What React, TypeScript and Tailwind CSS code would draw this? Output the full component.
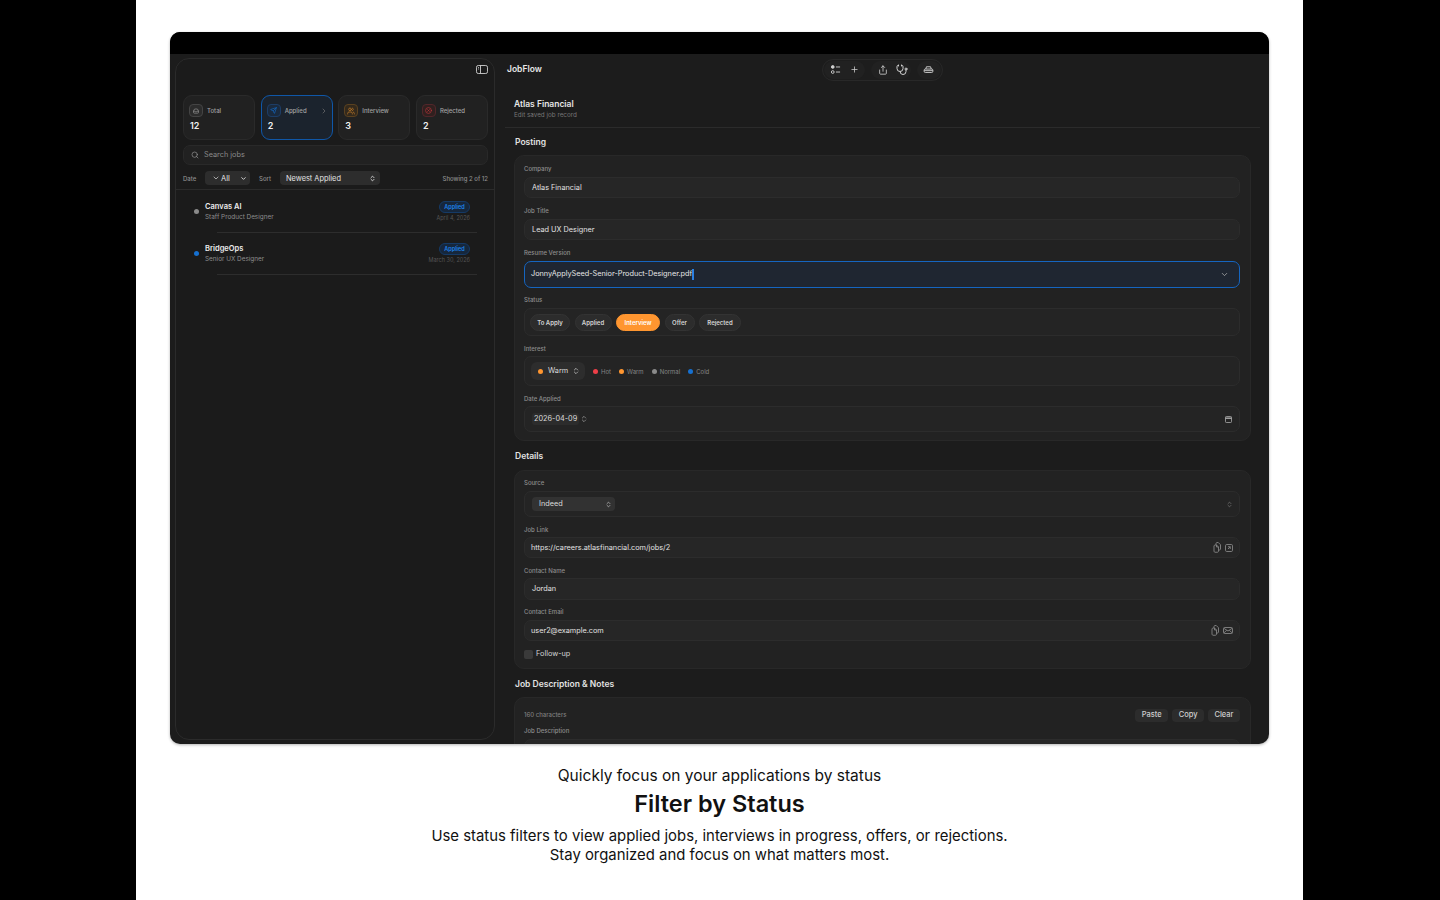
/**
 * JobFlow marketing slide: app window with status filter and job editor.
 */
import type { ReactNode } from "react";
import {
  ChevronDown,
  ChevronRight,
  ChevronsUpDown,
  CircleX,
  Plus,
  Search,
  Send,
  Share,
  Stethoscope,
  Users,
} from "lucide-react";

type IconProps = { className?: string };

function TrayIcon({ className }: IconProps) {
  return (
    <svg viewBox="0 0 24 24" fill="none" stroke="currentColor" strokeWidth="2" className={className} aria-hidden="true">
      <path d="M6 9c.5-2 1.500-3 3-3h6c1.500 0 2.500 1 3 3l1.500 3v4c0 1.500-1 2.500-2.500 2.500H7c-1.500 0-2.500-1-2.500-2.500v-4z" />
      <path d="M4.500 12.500H9c.5 1.500 1.500 2 3 2s2.500-.5 3-2h4.500" />
    </svg>
  );
}

function TaskListIcon({ className }: IconProps) {
  return (
    <svg viewBox="0 0 24 24" fill="none" stroke="currentColor" strokeWidth="2" className={className} aria-hidden="true">
      <circle cx="6" cy="6.500" r="3" fill="currentColor" />
      <circle cx="6" cy="17.500" r="3" />
      <path d="M13 6.500h9M13 17.500h9" />
    </svg>
  );
}

function PrintTrayIcon({ className }: IconProps) {
  return (
    <svg viewBox="0 0 24 24" fill="none" stroke="currentColor" strokeWidth="2" className={className} aria-hidden="true">
      <path d="M6 11l1.500-5h9L18 11" />
      <rect x="2.500" y="11" width="19" height="7.500" rx="2.500" />
      <path d="M2.500 14.500h19" />
    </svg>
  );
}

function SidebarIcon({ className }: IconProps) {
  return (
    <svg viewBox="0 0 24 18" fill="none" stroke="currentColor" strokeWidth="1.800" className={className} aria-hidden="true">
      <rect x="1" y="1" width="22" height="16" rx="3.500" />
      <path d="M9 1v16" />
      <path d="M4 5h2M4 8h2" strokeWidth="1.500" />
    </svg>
  );
}

function DocsIcon({ className }: IconProps) {
  return (
    <svg viewBox="0 0 16 22" fill="none" stroke="currentColor" strokeWidth="1.800" className={className} aria-hidden="true">
      <path d="M2 8c0-1 1-2 2-2h3l4 4v8.500c0 1-1 2-2 2H4c-1 0-2-1-2-2z" />
      <path d="M6 6V3c0-1 1-2 2-2h2.500L15 5.500V14c0 1-1 2-2 2h-2" />
      <path d="M7 6v4h4" />
    </svg>
  );
}

function OpenLinkIcon({ className }: IconProps) {
  return (
    <svg viewBox="0 0 16 16" fill="none" stroke="currentColor" strokeWidth="1.800" className={className} aria-hidden="true">
      <rect x="1" y="1" width="14" height="14" rx="2.500" />
      <path d="M6 5.500h4.500V10" />
      <path d="M10.500 5.500L6 10" />
    </svg>
  );
}

function EnvelopeIcon({ className }: IconProps) {
  return (
    <svg viewBox="0 0 20 14" fill="none" stroke="currentColor" strokeWidth="1.800" className={className} aria-hidden="true">
      <rect x="1" y="1" width="18" height="12" rx="2.500" />
      <path d="M1.500 2.500L10 8l8.500-5.500M1.500 12l6-5.500M18.500 12l-6-5.500" />
    </svg>
  );
}

function CalendarIcon({ className }: IconProps) {
  return (
    <svg viewBox="0 0 16 16" fill="none" stroke="currentColor" strokeWidth="1.800" className={className} aria-hidden="true">
      <rect x="1" y="1" width="14" height="14" rx="2.500" />
      <path d="M1 5h14" strokeWidth="3" />
    </svg>
  );
}

interface StatCardProps {
  label: string;
  value: string;
  icon: ReactNode;
  iconClass: string;
  active?: boolean;
}

function StatCard({ label, value, icon, iconClass, active }: StatCardProps) {
  return (
    <div
      className={`flex h-[45px] w-[72px] flex-col rounded-[9px] border pl-[5px] pt-[8px] ${
        active ? "border-[#0f57a8] bg-[#1b232d]" : "border-[#2a2a2a] bg-[#212121]"
      }`}
    >
      <div className="flex h-[13px] items-center">
        <span className={`flex h-[13px] w-[14px] items-center justify-center rounded-[4px] border ${iconClass}`}>
          {icon}
        </span>
        <span className="ml-[4px] text-[6px] font-medium leading-[11px] text-[#a3a3a3]">{label}</span>
        {active && <ChevronRight className="ml-auto mr-[4px] h-[8px] w-[8px] text-[#777]" />}
      </div>
      <span className="ml-[1px] mt-[2px] text-[9px] font-semibold leading-[14px] text-[#f0f0f0]">{value}</span>
    </div>
  );
}

function JobRow({ company, role, date, dot }: { company: string; role: string; date: string; dot: string }) {
  return (
    <div className="flex h-[42px] flex-col">
      <div className="flex h-[41px] items-start pl-[18px] pr-[24px] pt-[11px]">
        <span className={`mt-[7px] h-[5px] w-[5px] rounded-full ${dot}`} />
        <div className="ml-[6px] flex-1">
          <p className="text-[7.500px] font-semibold leading-[9px] text-[#ececec]">{company}</p>
          <p className="mt-[2px] text-[6.400px] leading-[9px] text-[#8d8d8d]">{role}</p>
        </div>
        <div className="-mt-px flex flex-col items-end">
          <span className="flex h-[12px] w-[31px] items-center justify-center rounded-full border border-[#153a66] bg-[#16273c] text-[5.500px] font-semibold text-[#1e84ea]">
            Applied
          </span>
          <span className="mt-[1px] text-[5.500px] leading-[9px] text-[#555]">{date}</span>
        </div>
      </div>
      <div className="ml-[41px] mr-[17px] h-px bg-[#2d2d2d]" />
    </div>
  );
}

function Sidebar() {
  return (
    <aside className="flex w-[330px] shrink-0 px-[5px] py-[4px]">
      <div className="flex w-full flex-col rounded-[14px] border border-[#2b2b2b] bg-[#1b1b1b]">
        <div className="flex h-[36px] shrink-0 items-start justify-end pr-[6px] pt-[6px]">
          <SidebarIcon className="h-[9px] w-[12px] text-[#cfcfcf]" />
        </div>
        <div className="flex justify-between pl-[7px] pr-[6px]">
          <StatCard
            label="Total"
            value="12"
            iconClass="border-[#444] bg-[#2c2c2c] text-[#999]"
            icon={<TrayIcon className="h-[8px] w-[8px]" />}
          />
          <StatCard
            active
            label="Applied"
            value="2"
            iconClass="border-[#1d3d66] bg-[#1a2a3e] text-[#1670d0]"
            icon={<Send className="h-[7px] w-[7px]" />}
          />
          <StatCard
            label="Interview"
            value="3"
            iconClass="border-[#5a4120] bg-[#33291c] text-[#c57f2c]"
            icon={<Users className="h-[8px] w-[8px]" />}
          />
          <StatCard
            label="Rejected"
            value="2"
            iconClass="border-[#52262a] bg-[#30201f] text-[#c8373c]"
            icon={<CircleX className="h-[7px] w-[7px]" />}
          />
        </div>
        <div className="ml-[7px] mr-[6px] mt-[5px] flex h-[20px] items-center rounded-[7px] border border-[#292929] bg-[#212121] pl-[7px]">
          <Search className="h-[8px] w-[8px] text-[#999]" />
          <span className="ml-[5px] pt-px text-[7.300px] text-[#8a8a8a]">Search jobs</span>
        </div>
        <div className="flex h-[24px] items-center pl-[7px] pr-[6px] pt-[2px] text-[6px] font-medium text-[#8f8f8f]">
          <span className="w-[22px]">Date</span>
          <div className="flex h-[14px] w-[45px] items-center rounded-[4px] bg-[#2d2d2d] pl-[7px] text-[7.500px] font-normal text-[#e3e3e3]">
            <ChevronDown className="h-[8px] w-[8px]" />
            <span className="ml-[1px] pt-px">All</span>
            <ChevronDown className="ml-auto mr-[3px] h-[7px] w-[7px]" strokeWidth={3} />
          </div>
          <span className="ml-[9px] w-[21px]">Sort</span>
          <div className="flex h-[14px] w-[100px] items-center rounded-[4px] bg-[#2d2d2d] pl-[6px] text-[7.400px] font-normal text-[#e3e3e3]">
            <span className="pt-px">Newest Applied</span>
            <ChevronsUpDown className="ml-auto mr-[4px] h-[7px] w-[7px]" strokeWidth={3} />
          </div>
          <span className="ml-auto text-[6px] text-[#8f8f8f]">Showing 2 of 12</span>
        </div>
        <div className="mb-px h-px bg-[#2b2b2b]" />
        <JobRow company="Canvas AI" role="Staff Product Designer" date="April 4, 2026" dot="bg-[#8a8a8a]" />
        <JobRow company="BridgeOps" role="Senior UX Designer" date="March 30, 2026" dot="bg-[#1670d0]" />
      </div>
    </aside>
  );
}

function Label({ children, className = "mb-[3px]" }: { children: ReactNode; className?: string }) {
  return (
    <p className={`h-[10px] shrink-0 text-[6px] font-medium leading-[10px] text-[#8e8e8e] ${className}`}>{children}</p>
  );
}

function TextField({ value, indent = "pl-[7px]", icons }: { value: string; indent?: string; icons?: ReactNode }) {
  return (
    <div
      className={`flex h-[21px] shrink-0 items-center rounded-[7px] border border-[#2c2c2c] bg-[#262626] pr-[6px] text-[7.300px] text-[#e2e2e2] ${indent}`}
    >
      <span className="pt-px">{value}</span>
      {icons && <span className="ml-auto flex items-center gap-[4px] text-[#858585]">{icons}</span>}
    </div>
  );
}

function Box({ className, children }: { className: string; children: ReactNode }) {
  return (
    <div className={`flex shrink-0 items-center rounded-[7px] border border-[#2c2c2c] bg-[#242424] ${className}`}>
      {children}
    </div>
  );
}

function StatusPill({ label, width, active }: { label: string; width: string; active?: boolean }) {
  return (
    <span
      className={`flex h-[17px] items-center justify-center rounded-full border text-[6px] font-semibold ${width} ${
        active ? "border-[#ff9630] bg-[#ff9630] text-white" : "border-[#333] bg-[#2c2c2c] text-[#d5d5d5]"
      }`}
    >
      {label}
    </span>
  );
}

function InterestKey({ label, dot }: { label: string; dot: string }) {
  return (
    <span className="flex items-center text-[6px] text-[#858585]">
      <span className={`mr-[3px] h-[5px] w-[5px] rounded-full ${dot}`} />
      {label}
    </span>
  );
}

function SectionTitle({ children, className }: { children: ReactNode; className: string }) {
  return (
    <h2 className={`flex h-[14px] shrink-0 items-center pl-[15px] text-[8.500px] font-semibold text-[#e2e2e2] ${className}`}>
      {children}
    </h2>
  );
}

function Card({ className, children }: { className: string; children: ReactNode }) {
  return (
    <section
      className={`ml-[14px] mr-[18px] flex shrink-0 flex-col rounded-[10px] border border-[#282828] bg-[#222222] pl-[9px] pr-[10px] ${className}`}
    >
      {children}
    </section>
  );
}

function Toolbar() {
  return (
    <div className="flex h-[22px] items-center rounded-full border border-[#282828] bg-[#1d1d1d] px-[1px] text-[#cfcfcf]">
      <div className="flex h-[18px] w-[41px] items-center justify-center gap-[9px] rounded-full bg-[#212121]">
        <TaskListIcon className="h-[11px] w-[11px]" />
        <Plus className="h-[9px] w-[9px]" />
      </div>
      <div className="ml-[6px] flex h-[18px] w-[40px] items-center gap-[8px] rounded-full bg-[#212121] pl-[7px]">
        <Share className="h-[10px] w-[10px]" />
        <Stethoscope className="h-[12px] w-[12px]" />
      </div>
      <div className="ml-[6px] flex h-[18px] w-[24px] items-center justify-center rounded-full bg-[#212121]">
        <PrintTrayIcon className="h-[11px] w-[11px]" />
      </div>
    </div>
  );
}

function Editor() {
  const docsClass = "h-[11px] w-[8px]";
  return (
    <main className="flex min-w-0 flex-1 flex-col">
      <header className="flex h-[31px] shrink-0 items-center pl-[7px] text-[8.500px] font-semibold text-[#e8e8e8]">
        JobFlow
        <div className="ml-[280px]">
          <Toolbar />
        </div>
      </header>
      <div className="ml-[5px] mr-[9px] mt-[12px] h-[31px] shrink-0 border-b border-[#2b2b2b] pl-[9px]">
        <p className="text-[8.500px] font-semibold leading-[14px] text-[#e6e6e6]">Atlas Financial</p>
        <p className="text-[6.300px] leading-[8px] text-[#777]">Edit saved job record</p>
      </div>
      <SectionTitle className="mt-[7px]">Posting</SectionTitle>
      <Card className="mt-[6px] h-[286px] pt-[8px]">
        <Label>Company</Label>
        <TextField value="Atlas Financial" />
        <Label className="mb-[3px] mt-[8px]">Job Title</Label>
        <TextField value="Lead UX Designer" />
        <Label className="mb-[3px] mt-[8px]">Resume Version</Label>
        <div className="flex h-[27px] shrink-0 items-center rounded-[7px] border border-[#1565c0] bg-[#1f2631] pl-[6px] pr-[10px] text-[7.300px] text-[#e6e6e6]">
          <span>JonnyApplySeed-Senior-Product-Designer.pdf</span>
          <span className="h-[11px] w-[1.500px] bg-[#2a7fe0]" />
          <ChevronDown className="ml-auto h-[9px] w-[9px] text-[#b0b0b0]" />
        </div>
        <Label className="mb-[3px] mt-[7px]">Status</Label>
        <Box className="h-[28px] gap-[4.500px] pl-[5px]">
          <StatusPill label="To Apply" width="w-[40px]" />
          <StatusPill label="Applied" width="w-[37px]" />
          <StatusPill active label="Interview" width="w-[44px]" />
          <StatusPill label="Offer" width="w-[30px]" />
          <StatusPill label="Rejected" width="w-[42px]" />
        </Box>
        <Label className="mb-[2px] mt-[8px]">Interest</Label>
        <Box className="h-[30px] pl-[6px]">
          <span className="mr-[8px] flex h-[18px] w-[54px] items-center rounded-[6px] bg-[#2d2d2d] pl-[7px] text-[7.300px] text-[#dcdcdc]">
            <span className="mr-[5px] h-[5px] w-[5px] rounded-full bg-[#ff9630]" />
            <span className="pt-px">Warm</span>
            <ChevronsUpDown className="ml-[4px] h-[8px] w-[8px]" />
          </span>
          <span className="flex gap-[8px]">
            <InterestKey label="Hot" dot="bg-[#ee3f48]" />
            <InterestKey label="Warm" dot="bg-[#ff9630]" />
            <InterestKey label="Normal" dot="bg-[#8a8a8a]" />
            <InterestKey label="Cold" dot="bg-[#1670d0]" />
          </span>
        </Box>
        <Label className="mb-[2px] mt-[8px]">Date Applied</Label>
        <Box className="h-[26px] pl-[7px] pr-[7px]">
          <span className="rounded-[3px] bg-[#2c2c2c] px-[2px] pt-px text-[7.300px] text-[#dcdcdc]">2026-04-09</span>
          <ChevronsUpDown className="ml-[1px] h-[10px] w-[8px] text-[#aaa]" />
          <CalendarIcon className="ml-auto h-[7px] w-[7px] text-[#b5b5b5]" />
        </Box>
      </Card>
      <SectionTitle className="mt-[8px]">Details</SectionTitle>
      <Card className="mt-[7px] h-[199px] pt-[7px]">
        <Label>Source</Label>
        <Box className="h-[26px] pl-[7px] pr-[6px]">
          <span className="flex h-[14px] w-[83px] items-center rounded-[4px] bg-[#323232] pl-[7px] text-[7.300px] text-[#dcdcdc]">
            <span className="pt-px">Indeed</span>
            <ChevronsUpDown className="ml-auto mr-[3px] h-[7px] w-[7px]" />
          </span>
          <ChevronsUpDown className="ml-auto h-[7px] w-[7px] text-[#888]" />
        </Box>
        <Label className="mb-[2px] mt-[8px]">Job Link</Label>
        <TextField
          value="https://careers.atlasfinancial.com/jobs/2"
          indent="pl-[6px]"
          icons={
            <>
              <DocsIcon className={docsClass} />
              <OpenLinkIcon className="h-[8px] w-[8px]" />
            </>
          }
        />
        <Label className="mb-[2px] mt-[8px]">Contact Name</Label>
        <div className="flex h-[22px] shrink-0 items-center rounded-[7px] border border-[#2c2c2c] bg-[#262626] pl-[7px] pt-px text-[7.300px] text-[#e2e2e2]">
          Jordan
        </div>
        <Label className="mb-[3px] mt-[7px]">Contact Email</Label>
        <TextField
          value="user2@example.com"
          indent="pl-[6px]"
          icons={
            <>
              <DocsIcon className={docsClass} />
              <EnvelopeIcon className="h-[7px] w-[10px]" />
            </>
          }
        />
        <div className="mt-[7px] flex h-[12px] shrink-0 items-center text-[7.300px] text-[#d5d5d5]">
          <span className="mr-[3px] h-[9px] w-[9px] rounded-[2px] bg-[#3a3a3a]" />
          <span className="pt-px">Follow-up</span>
        </div>
      </Card>
      <SectionTitle className="mt-[8px]">Job Description &amp; Notes</SectionTitle>
      <Card className="mt-[6px] h-[70px] pt-[10px]">
        <div className="flex h-[14px] shrink-0 items-center text-[6px] font-medium text-[#7f7f7f]">
          <span className="-mt-px">160 characters</span>
          <span className="ml-auto flex gap-[4px]">
            {["Paste", "Copy", "Clear"].map((action) => (
              <span
                key={action}
                className="flex h-[13px] items-center rounded-[4px] bg-[#2c2c2c] px-[6.500px] text-[7.500px] text-[#cfcfcf]"
              >
                {action}
              </span>
            ))}
          </span>
        </div>
        <Label className="mb-[3px] mt-[4px]">Job Description</Label>
        <div className="h-[20px] shrink-0 rounded-t-[7px] border border-[#2c2c2c] bg-[#262626]" />
      </Card>
    </main>
  );
}

export default function App() {
  return (
    <div className="flex h-[900px] w-[1440px] overflow-hidden bg-black font-['Inter',sans-serif]">
      <div className="ml-[136px] flex w-[1167px] flex-col items-center bg-white pt-[32px]">
        <div className="flex h-[712px] w-[1099px] shrink-0 flex-col overflow-hidden rounded-[10px] bg-[#1c1c1c] shadow-[0_1px_3px_rgba(0,0,0,0.3)]">
          <div className="h-[22px] shrink-0 bg-black" />
          <div className="flex min-h-0 flex-1">
            <Sidebar />
            <Editor />
          </div>
        </div>
        <p className="mt-[22px] text-[15.500px] leading-[20px] text-[#111]">Quickly focus on your applications by status</p>
        <h1 className="mt-[3px] text-[23.500px] font-semibold leading-[30px] text-[#111]">Filter by Status</h1>
        <p className="mt-[8px] text-center text-[14.900px] leading-[19px] text-[#111]">
          Use status filters to view applied jobs, interviews in progress, offers, or rejections.
          <br />
          Stay organized and focus on what matters most.
        </p>
      </div>
    </div>
  );
}
